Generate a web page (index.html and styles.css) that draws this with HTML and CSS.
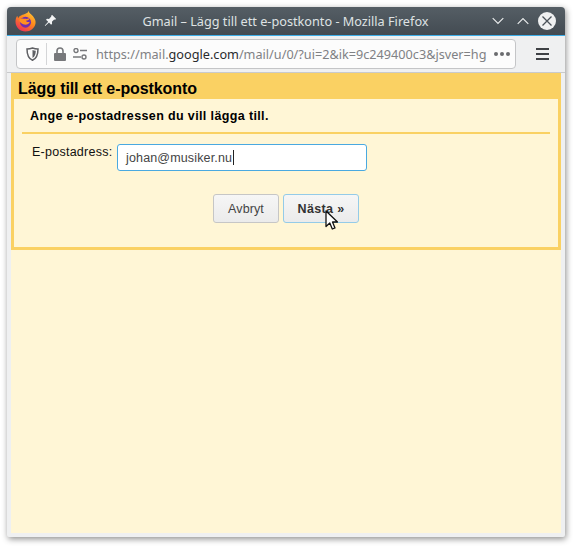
FILE: index.html
```html
<!DOCTYPE html>
<html lang="sv">
<head>
<meta charset="utf-8">
<title>Gmail – Lägg till ett e-postkonto</title>
<link rel="stylesheet" href="styles.css">
</head>
<body>
<div class="window">
  <header class="titlebar">
    <svg class="ff-logo" width="21" height="22" viewBox="0 0 21 22">
      <defs>
        <linearGradient id="ffg" x1="0.8" y1="0" x2="0.2" y2="1">
          <stop offset="0" stop-color="#ffc93a"/>
          <stop offset="0.45" stop-color="#ff8a1a"/>
          <stop offset="1" stop-color="#ec2a5c"/>
        </linearGradient>
      </defs>
      <path d="M13.500.5c.2 2.600 2.700 3.600 4.500 5.700 2.200 2.600 2.900 5 2.500 7.300-.8 4.700-5 8-10 8-5.500 0-10-4.300-10-9.800 0-2.200.6-4.400 1.800-6 .1 1 .4 1.800 1 2.500.6-1.800 2-2.600 3.200-3C9 4.100 13.500 3.600 13.500.5z" fill="url(#ffg)"/>
      <circle cx="10.500" cy="12.200" r="5.500" fill="#6f2db0"/>
      <path d="M4.500 9.500c2.300-1.700 4-1 5.800-.7 2 .3 3.500-.2 4.500-1 0 2-2.300 3-4 3 .8 1.200 2.600 1.500 4 .9-.5 2.300-3.400 3.300-5.600 2.800-2.500-.5-5.200-2.500-4.700-5z" fill="#ff9020"/>
    </svg>
    <svg class="pin" width="13" height="13" viewBox="0 0 13 13">
      <path d="M8 .8l4.200 4.200-1.300.7-.7-.3-2.300 2.300.2 2-1 1-2.100-2.200L1.200 12 .8 11.600l3.400-3.800L2 5.700l1-1 2 .2 2.300-2.300-.2-.7z" fill="#f2f3f4"/>
    </svg>
    <div class="title">Gmail – Lägg till ett e-postkonto - Mozilla Firefox</div>
    <div class="win-controls">
      <svg class="win-down" width="12" height="8" viewBox="0 0 12 8"><path d="M.7 1.200l5.300 5.300 5.300-5.300" class="win-stroke"/></svg>
      <svg class="win-up" width="12" height="8" viewBox="0 0 12 8"><path d="M.7 6.800l5.300-5.300 5.300 5.300" class="win-stroke"/></svg>
      <div class="close-btn">
        <svg width="12" height="12" viewBox="0 0 12 12"><path d="M1.500 1.500l9 9M10.500 1.500l-9 9" class="close-stroke"/></svg>
      </div>
    </div>
  </header>
  <nav class="toolbar">
    <div class="urlbar">
      <svg class="shield" width="13" height="14" viewBox="0 0 13 14">
        <path d="M6.500 1C8.500 1.800 10 2 12 2c0 5-1 9.500-5.500 11.200C2 11.500 1 7 1 2c2 0 3.500-.2 5.500-1z" fill="none" stroke="#5f6064" stroke-width="1.500"/>
        <path d="M6.500 3c1 .4 2 .6 3.300.7-.1 3.300-.8 5.800-3.300 7.200z" fill="#5f6064"/>
      </svg>
      <span class="sep"></span>
      <svg class="lock" width="12" height="14" viewBox="0 0 12 14">
        <path d="M3 6V4a3 3 0 0 1 6 0v2" fill="none" stroke="#77787b" stroke-width="1.600"/>
        <rect x="0" y="6" width="12" height="8" rx="1" fill="#77787b"/>
      </svg>
      <svg class="perm" width="14" height="12" viewBox="0 0 14 12">
        <circle cx="3" cy="2.500" r="2" fill="none" stroke="#77787b" stroke-width="1.400"/>
        <path d="M7 2.500h7M0 9h8" stroke="#77787b" stroke-width="1.600"/>
        <circle cx="11" cy="9" r="2" fill="none" stroke="#77787b" stroke-width="1.400"/>
      </svg>
      <div class="url">https://mail.<b>google.com</b>/mail/u/0/?ui=2&amp;ik=9c249400c3&amp;jsver=hg</div>
      <div class="dots"><i></i><i></i><i></i></div>
    </div>
    <div class="menu"><i></i><i></i><i></i></div>
  </nav>
  <main class="content">
    <section class="dialog">
      <h1 class="dialog-title">Lägg till ett e-postkonto</h1>
      <div class="dialog-body">
        <h2 class="prompt">Ange e-postadressen du vill lägga till.</h2>
        <div class="field-row">
          <label class="field-label">E-postadress:</label>
          <div class="input">johan@musiker.nu<span class="caret"></span></div>
        </div>
        <div class="buttons">
          <button class="btn">Avbryt</button>
          <button class="btn btn-next">Nästa »
            <svg class="cursor" width="14" height="21" viewBox="0 0 14 21">
              <path d="M1 1v15.500l3.800-3.500 2.500 6 2.700-1.100-2.500-5.900h5z" fill="#fff" stroke="#111" stroke-width="1.300" stroke-linejoin="round"/>
            </svg>
          </button>
        </div>
      </div>
    </section>
  </main>
</div>
</body>
</html>
```
FILE: styles.css
```css
* { box-sizing: border-box; }
html, body { margin: 0; height: 100%; background: #fff; overflow: hidden; }
body { padding: 7px 13px 13px 7px; font-family: "Liberation Sans", Arial, sans-serif; }

.window {
  width: 558px;
  height: 530px;
  display: flex;
  flex-direction: column;
  background: #eff0f1;
  border-radius: 4px 4px 2px 2px;
  box-shadow: 1px 2px 6px rgba(0,0,0,.45);
  overflow: hidden;
}

.titlebar {
  height: 29px;
  flex: none;
  display: flex;
  align-items: center;
  padding: 0 9px 1px 8px;
  background: linear-gradient(#555e65, #434b52);
  border-bottom: 1px solid #3daee9;
  color: #e6e8e9;
}
.ff-logo { flex: none; margin-top: 0; }
.pin { flex: none; margin-left: 8px; }
.title {
  flex: 1;
  text-align: center;
  font: 12.700px "Noto Sans", sans-serif;
  color: #dfe2e3;
  white-space: nowrap;
  padding-left: 22px;
}
.win-controls { display: flex; align-items: center; flex: none; }
.win-up { margin-left: 13px; }
.close-btn { margin-left: 9px; }
.win-stroke { fill: none; stroke: #e8eaeb; stroke-width: 1.200; }
.close-btn {
  width: 18px; height: 18px; border-radius: 50%;
  background: #eff0f1;
  display: flex; align-items: center; justify-content: center;
}
.close-stroke { fill: none; stroke: #4a5259; stroke-width: 1.300; }

.toolbar {
  height: 37px;
  flex: none;
  display: flex;
  align-items: center;
  padding: 0 11px 0 9px;
  border-bottom: 1px solid #c9cacc;
}
.urlbar {
  width: 500px;
  height: 30px;
  display: flex;
  align-items: center;
  background: #fcfcfc;
  border: 1px solid #c4c5c7;
  border-radius: 4px;
  padding-left: 9px;
  margin-top: -1px;
}
.shield { flex: none; }
.sep { width: 1px; height: 22px; background: #d4d5d7; margin: 0 7px 0 7px; flex: none; }
.lock { flex: none; }
.perm { flex: none; margin-left: 7px; }
.url {
  flex: 1;
  margin-left: 9px;
  font: 12.680px "Noto Sans", sans-serif;
  color: #808184;
  white-space: nowrap;
}
.url b { font-weight: 400; color: #2a2b2d; }
.dots { display: flex; gap: 2px; margin: 0 5px 0 6px; flex: none; }
.dots i { width: 4px; height: 4px; border-radius: 50%; background: #6a6b6e; }
.menu { display: flex; flex-direction: column; gap: 3px; width: 13px; margin-left: 20px; flex: none; }
.menu i { height: 2px; background: #3e4145; }

.content {
  flex: 1;
  margin: 0 4px 4px;
  background: #fff6d6;
}
.dialog {
  border: 3px solid #fad163;
  border-top: 0;
  height: 177px;
  display: flex;
  flex-direction: column;
}
.dialog-title {
  height: 26px;
  flex: none;
  background: #fad163;
  font-size: 16px;
  line-height: 17px;
  font-weight: 700;
  letter-spacing: -.1px;
  color: #000;
  margin: 0 -3px;
  padding: 7px 0 0 7px;
}
.dialog-body { padding: 0 8px; flex: 1; }
.prompt {
  margin: 0;
  height: 35px;
  border-bottom: 2px solid #fad163;
  padding: 10px 0 0 8px;
  font-size: 12.500px;
  line-height: 15px;
  font-weight: 700;
  letter-spacing: .37px;
  color: #000;
}
.field-row { display: flex; margin-top: 10px; }
.field-label {
  width: 95px;
  padding: 1px 0 0 10px;
  font-size: 12.500px;
  line-height: 15px;
  letter-spacing: .25px;
  color: #111;
}
.input {
  width: 250px;
  height: 27px;
  background: #fff;
  border: 1px solid #4aa9e0;
  border-radius: 3px;
  padding: 5px 0 0 8px;
  font-size: 12.500px;
  line-height: 16px;
  letter-spacing: .15px;
  color: #444;
  display: flex;
  align-items: flex-start;
}
.caret { width: 1px; height: 15px; background: #222; margin-left: 1px; }
.buttons { display: flex; margin: 23px 0 0 191px; gap: 4px; }
.btn {
  position: relative;
  width: 66px;
  height: 29px;
  padding: 0;
  background: linear-gradient(#f6f6f6, #ebebeb);
  border: 1px solid #c6c6c6;
  border-radius: 3px;
  font: 12.500px/16px "Liberation Sans", Arial, sans-serif;
  letter-spacing: .1px;
  color: #444;
}
.btn-next {
  width: 76px;
  border-color: #94cbe8;
  font-weight: 700;
  letter-spacing: .35px;
  color: #333;
}
.cursor { position: absolute; left: 41px; top: 15px; }
```
